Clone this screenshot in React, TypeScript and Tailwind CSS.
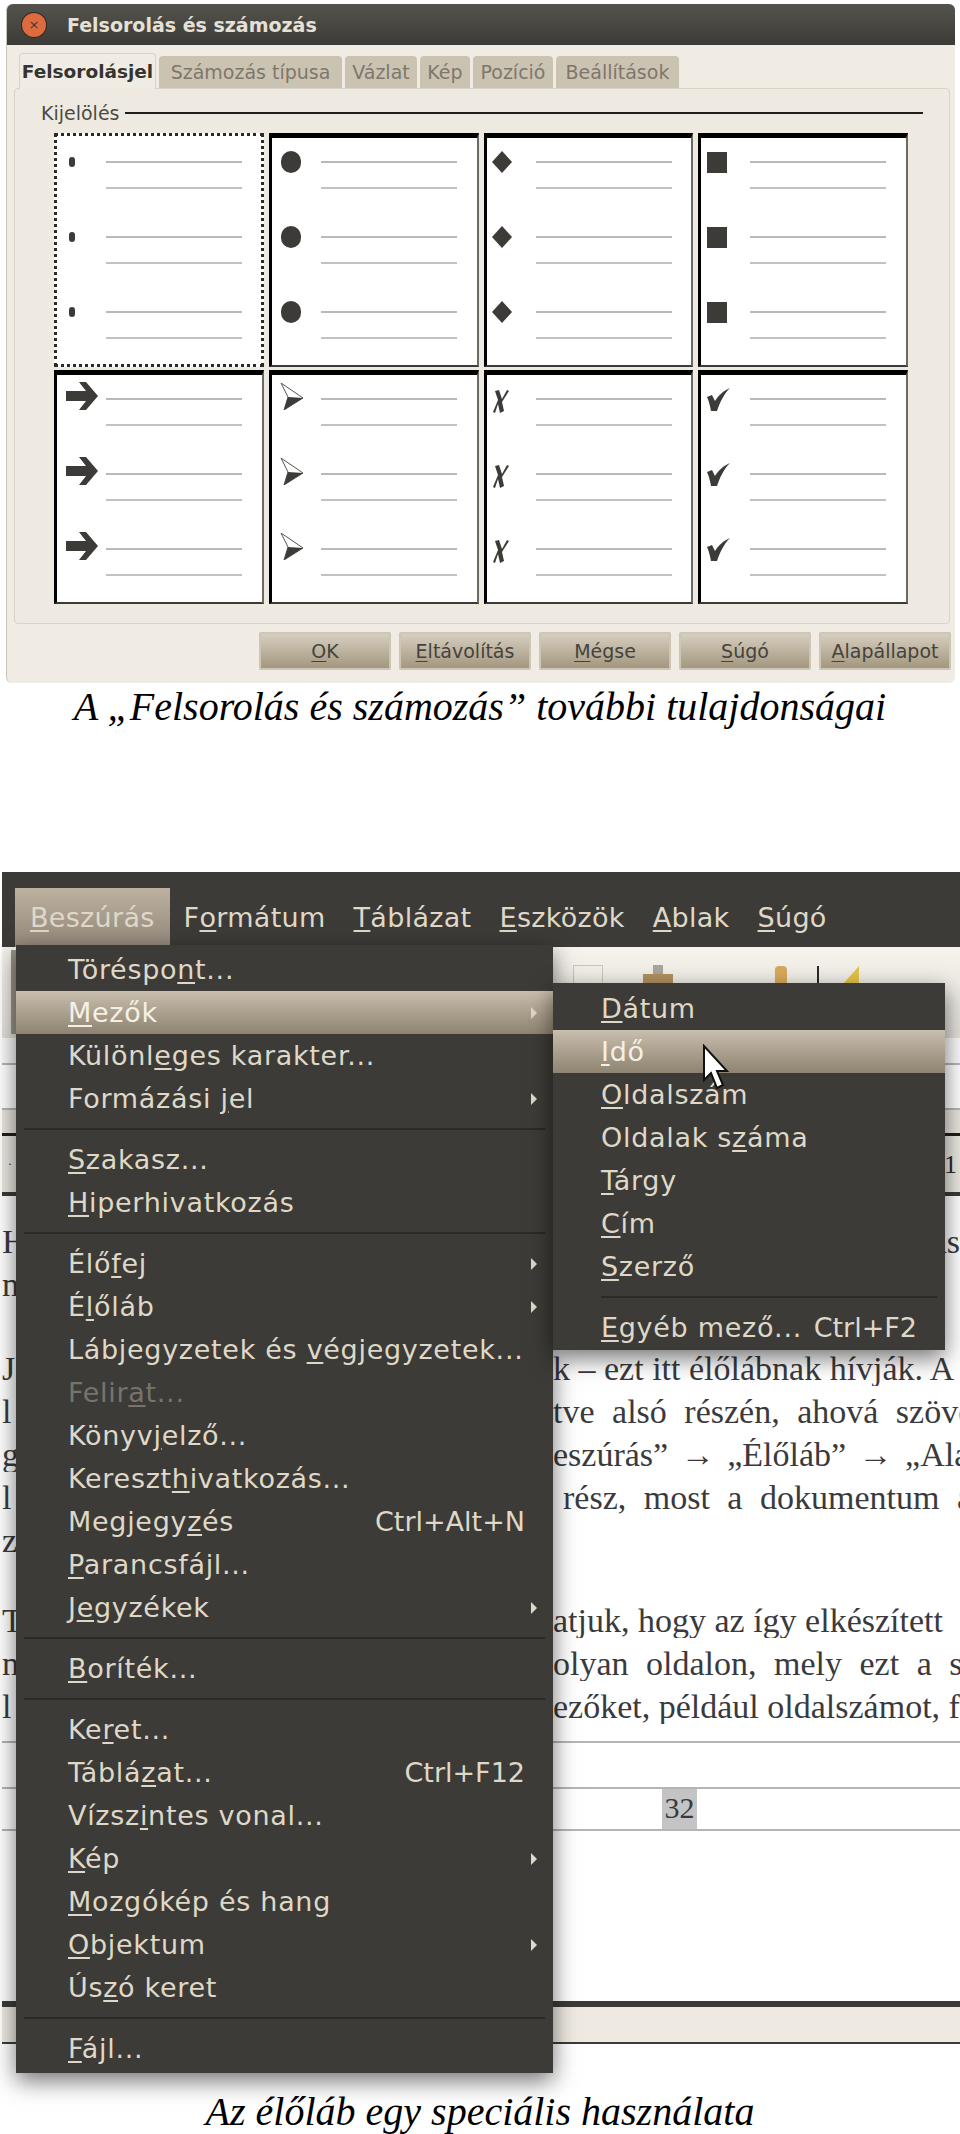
import React from 'react';

type MenuEntry = { label?: string; sub?: boolean; shortcut?: string; active?: boolean; disabled?: boolean; sep?: boolean };

const MAIN_MENU: MenuEntry[] = [
  { label: 'Töréspo_nt...' },
  { label: '_Mezők', sub: true, active: true },
  { label: 'Különl_eges karakter...' },
  { label: 'Formázási _jel', sub: true },
  { sep: true },
  { label: '_Szakasz...' },
  { label: '_Hiperhivatkozás' },
  { sep: true },
  { label: 'Élő_fej', sub: true },
  { label: 'É_lőláb', sub: true },
  { label: 'Lábjegyzetek és _végjegyzetek...' },
  { label: 'Felir_at...', disabled: true },
  { label: 'Könyv_jelző...' },
  { label: 'Kereszt_hivatkozás...' },
  { label: 'Megjegy_zés', shortcut: 'Ctrl+Alt+N' },
  { label: '_Parancsfájl...' },
  { label: 'J_egyzékek', sub: true },
  { sep: true },
  { label: '_Boríték...' },
  { sep: true },
  { label: 'Ke_ret...' },
  { label: 'Táblá_zat...', shortcut: 'Ctrl+F12' },
  { label: 'Vízsz_intes vonal...' },
  { label: '_Kép', sub: true },
  { label: '_Mozgókép és hang' },
  { label: '_Objektum', sub: true },
  { label: 'Ús_zó keret' },
  { sep: true },
  { label: '_Fájl...' },
];

const FIELDS_MENU: MenuEntry[] = [
  { label: '_Dátum' },
  { label: '_Idő', active: true },
  { label: '_Oldalszám' },
  { label: 'Oldalak s_záma' },
  { label: '_Tárgy' },
  { label: '_Cím' },
  { label: '_Szerző' },
  { sep: true },
  { label: '_Egyéb mező...', shortcut: 'Ctrl+F2' },
];

const DOC_LINES = [
  { left: 'H', right: 'ás', end: true, h: 'h-[43px]' },
  { left: 'n', right: '', h: 'h-[43px]' },
  { left: '', right: '', h: 'h-[41px]' },
  { left: 'J', right: 'k – ezt itt élőlábnak hívják. A', h: 'h-[43px]' },
  { left: 'l', right: 'tve alsó részén, ahová szöveg', wide: true, h: 'h-[43px]' },
  { left: 'g', right: 'eszúrás” → „Élőláb” → „Alap', mid: true, h: 'h-[43px]' },
  { left: 'l', right: 'rész, most a dokumentum alján', wide: true, pad: true, h: 'h-[43px]' },
  { left: 'z', right: '', h: 'h-[43px]' },
  { left: '', right: '', h: 'h-[37px]' },
  { left: 'T', right: 'atjuk, hogy az így elkészített', h: 'h-[43px]' },
  { left: 'n', right: 'olyan oldalon, mely ezt a stílust', wide: true, h: 'h-[43px]' },
  { left: 'l', right: 'ezőket, például oldalszámot, f', h: 'h-[43px]' },
];

const BUTTONS = ['_OK', '_Eltávolítás', '_Mégse', '_Súgó', '_Alapállapot'];

const TABS = [
  { label: 'Számozás típusa', w: 'w-[183px]' },
  { label: 'Vázlat', w: 'w-[72px]' },
  { label: 'Kép', w: 'w-[50px]' },
  { label: 'Pozíció', w: 'w-[80px]' },
  { label: 'Beállítások', w: 'w-[123px]' },
];

function Mnemonic({ text }: { text: string }) {
  const i = text.indexOf('_');
  if (i < 0) return <>{text}</>;
  return (
    <>
      {text.slice(0, i)}
      <span className="underline underline-offset-[3px]">{text[i + 1]}</span>
      {text.slice(i + 2)}
    </>
  );
}

function Bullet({ kind }: { kind: number }) {
  const cls = 'shrink-0 fill-[#3c3b37]';
  switch (kind) {
    case 0:
      return <div className="ml-[12px] h-[10px] w-[6px] shrink-0 rounded-full bg-[#3c3b37]" />;
    case 1:
      return <div className="ml-[9px] h-[22px] w-[20px] shrink-0 rounded-full bg-[#3c3b37]" />;
    case 2:
      return (
        <svg className={`ml-[5px] ${cls}`} width="20" height="22" viewBox="0 0 20 22">
          <path d="M10 0L20 11L10 22L0 11Z" />
        </svg>
      );
    case 3:
      return <div className="ml-[6px] h-[21px] w-[20px] shrink-0 bg-[#3c3b37]" />;
    case 4:
      return (
        <svg className={`ml-[9px] -mt-[6px] ${cls}`} width="32" height="28" viewBox="0 0 32 28">
          <path d="M13 0h7l12 14-12 14h-7l7-9H0V9h20z" />
        </svg>
      );
    case 5:
      return (
        <svg className="ml-[8px] -mt-[6px] shrink-0" width="23" height="27" viewBox="0 0 23 27">
          <path d="M1 0L23 15L4 27L8 14Z" fill="#fff" stroke="#55534d" strokeWidth="1" />
          <path d="M8 14L23 15L4 27Z" fill="#3c3b37" />
        </svg>
      );
    case 6:
      return (
        <svg className="ml-[6px] mt-[4px] shrink-0" width="16" height="23" viewBox="0 0 16 23">
          <path d="M2 1L6 0L9 9L14 0L16 1L9 12L11 21L7 23L5 14L2 23L0 22L5 10Z" fill="#3c3b37" />
        </svg>
      );
    default:
      return (
        <svg className="ml-[6px] mt-[1px] shrink-0" width="23" height="23" viewBox="0 0 23 23">
          <path d="M0 9L5 7L8 13C12 7 16 3 23 0C17 6 13 14 10 23L4 23C3 18 2 13 0 9Z" fill="#3c3b37" />
        </svg>
      );
  }
}

function BulletCell({ kind, selected }: { kind: number; selected?: boolean }) {
  const frame = selected
    ? 'border-[3px] border-dotted border-[#2b2a27] pt-[25px]'
    : 'border-t-[5px] border-l-[3px] border-r-2 border-b-2 border-t-black border-l-black border-r-[#6d6a62] border-b-[#3c3b37] pt-[23px]';
  return (
    <div className={`h-[234px] bg-white ${frame}`}>
      {[0, 1, 2].map((n) => (
        <div key={n} className="h-[75px]">
          <div className="flex h-[2px] items-center">
            <div className="flex w-[49px] shrink-0 items-center">
              <Bullet kind={kind} />
            </div>
            <div className="h-[2px] w-[136px] bg-[#b9b9b9]" />
          </div>
          <div className="ml-[49px] mt-[24px] h-[2px] w-[136px] bg-[#c2c2c2]" />
        </div>
      ))}
    </div>
  );
}

function Dialog() {
  return (
    <div className="ml-[6px] mt-[4px] h-[679px] w-[949px] rounded-[6px] border-l border-[#c8c3b8] bg-[#f0ece4]">
      <div className="flex h-[41px] items-center rounded-t-[6px] bg-gradient-to-b from-[#55534d] to-[#3c3b37] pl-[15px]">
        <div className="flex h-[24px] w-[24px] items-center justify-center rounded-full bg-[#dd6b3d] text-[13px] leading-none text-[#3c3b37] ring-1 ring-[#2c2b28]">
          ×
        </div>
        <span className="ml-[21px] mt-[2px] text-[19px] font-bold text-[#e6e1d6]">Felsorolás és számozás</span>
      </div>

      <div className="flex items-end gap-[3px] pl-[12px] pt-[8px]">
        <div className="relative z-10 -mb-px flex h-[36px] w-[137px] items-center justify-center rounded-t-[4px] border border-b-0 border-[#d8d3c8] bg-[#f0ece4] text-[18.5px] font-bold text-[#35342f]">
          Felsorolásjel
        </div>
        {TABS.map((t) => (
          <div key={t.label} className={`flex h-[32px] items-center justify-center rounded-t-[4px] bg-[#cbc3b2] text-[19px] text-[#7d776b] ${t.w}`}>
            {t.label}
          </div>
        ))}
      </div>

      <div className="ml-[7px] h-[536px] w-[936px] rounded-[4px] border border-[#d8d3c8] bg-[#eeeae2] px-[26px] pt-[12px]">
        <div className="flex items-center gap-[6px]">
          <span className="text-[19px] leading-[24px] text-[#4c4a42]">Kijelölés</span>
          <div className="h-[2px] flex-1 bg-[#1f1e1c]" />
        </div>
        <div className="ml-[13px] mt-[8px] grid w-[854px] grid-cols-4 gap-x-[5px] gap-y-[3px]">
          {[0, 1, 2, 3, 4, 5, 6, 7].map((k) => (
            <BulletCell key={k} kind={k} selected={k === 0} />
          ))}
        </div>
      </div>

      <div className="mt-[8px] flex justify-end gap-[8px] pr-[4px]">
        {BUTTONS.map((b) => (
          <div
            key={b}
            className="flex h-[38px] w-[132px] items-center justify-center rounded-[2px] border-2 border-[#cdc5b5] bg-gradient-to-b from-[#d6cebf] to-[#a4977f] text-[19px] text-[#45433c]"
          >
            <Mnemonic text={b} />
          </div>
        ))}
      </div>
    </div>
  );
}

function MenuList({ items, className }: { items: MenuEntry[]; className: string }) {
  return (
    <div className={`absolute bg-[#3c3b37] shadow-[0_8px_22px_rgba(0,0,0,0.55)] ${className}`}>
      {items.map((it, idx) =>
        it.sep ? (
          <div key={idx} className="flex h-[18px] items-center px-[8px]">
            <div className="h-[2px] w-full bg-[#2b2a27]" />
          </div>
        ) : (
          <div
            key={idx}
            className={`flex h-[43px] items-center justify-between pl-[52px] text-[27px] leading-none whitespace-nowrap ${it.sub ? 'pr-[16px]' : 'pr-[28px]'} ${it.active ? 'bg-gradient-to-b from-[#c9bfae] to-[#8f8371] text-[#f5f0e5]' : it.disabled ? 'text-[#77746c]' : 'text-[#dfd8c8]'}`}
          >
            <span className="tracking-[0.7px]">
              <Mnemonic text={it.label ?? ''} />
            </span>
            {it.shortcut && <span>{it.shortcut}</span>}
            {it.sub && (
              <svg width="6" height="12" viewBox="0 0 6 12">
                <path d="M0 0L6 6L0 12Z" fill="#dfd8c8" />
              </svg>
            )}
          </div>
        ),
      )}
    </div>
  );
}

function MenuBar() {
  const names = ['F_ormátum', '_Táblázat', '_Eszközök', '_Ablak', '_Súgó'];
  return (
    <div className="flex h-[75px] items-end bg-[#3c3b37] pl-[13px] text-[27px] leading-none tracking-[0.3px] text-[#dfd8c8]">
      <div className="flex h-[59px] items-center bg-gradient-to-b from-[#bdb2a0] to-[#93877a] px-[15px]">
        <Mnemonic text="_Beszúrás" />
      </div>
      {names.map((n) => (
        <div key={n} className="flex h-[59px] items-center px-[14px]">
          <Mnemonic text={n} />
        </div>
      ))}
    </div>
  );
}

function DocBackground() {
  return (
    <>
      <div className="h-[91px] bg-gradient-to-b from-[#f6f3ed] to-[#e3e0d9] pl-[9px] pt-[3px]">
        <div className="flex h-[84px] items-start">
          <div className="h-[84px] w-[5px] bg-[#9a948a]" />
          <div className="ml-[557px] mt-[15px] flex items-end">
            <div className="h-[19px] w-[30px] border border-b-0 border-[#c9c5bc]" />
            <div className="ml-[40px] flex h-[19px] w-[30px] flex-col items-center">
              <div className="h-[9px] w-[10px] bg-[#a9a59c]" />
              <div className="h-[10px] w-[30px] bg-[#b08f5e]" />
            </div>
            <div className="ml-[102px] h-[18px] w-[12px] rounded-t-[4px] bg-[#d6a95c]" />
            <div className="ml-[30px] h-[18px] w-[2px] bg-[#2b2a27]" />
            <svg className="ml-[24px]" width="16" height="18" viewBox="0 0 16 18">
              <path d="M16 0V18H0Z" fill="#e3c348" />
            </svg>
          </div>
        </div>
      </div>
      <div className="h-[25px] bg-[#fafafa]" />
      <div className="h-[2px] bg-[#b5b5b5]" />
      <div className="h-[43px] bg-white" />
      <div className="h-[2px] bg-[#b5b5b5]" />
      <div className="h-[23px] bg-[#e9e5dc]" />
      <div className="h-[3px] bg-[#1f1e1c]" />
      <div className="flex h-[56px] items-center justify-between bg-[#ebe8e1] pl-[6px] pr-[3px] font-['Liberation_Serif',serif] text-[26px] text-[#2b2a27]">
        <span className="text-[12px]">·</span>
        <span>1</span>
      </div>
      <div className="h-[4px] bg-[#3c3b37]" />
      <div className="bg-white pt-[24px] font-['Liberation_Serif',serif] text-[34px] leading-none text-[#3a3a3e]">
        {DOC_LINES.map((line, i) => (
          <div key={i} className={`flex items-center ${line.h}`}>
            <span className="w-[14px] shrink-0 overflow-hidden whitespace-nowrap">{line.left}</span>
            <div
              className={`ml-[537px] min-w-0 flex-1 overflow-hidden whitespace-nowrap ${line.end ? 'text-right' : ''} ${line.wide ? '[word-spacing:9px]' : ''} ${line.mid ? '[word-spacing:4px]' : ''} ${line.pad ? 'pl-[10px]' : ''}`}
            >
              {line.right}
            </div>
          </div>
        ))}
      </div>
      <div className="h-[13px] bg-white" />
      <div className="h-[2px] bg-[#b5b5b5]" />
      <div className="h-[44px] bg-white" />
      <div className="h-[2px] bg-[#b5b5b5]" />
      <div className="flex h-[40px] items-center bg-white pl-[660px] font-['Liberation_Serif',serif] text-[30px] text-[#3a3a3e]">
        <span className="flex h-[40px] w-[35px] items-center justify-center bg-[#c4c4c4] pb-[3px]">32</span>
      </div>
      <div className="h-[2px] bg-[#b5b5b5]" />
      <div className="h-[170px] bg-white" />
      <div className="h-[6px] bg-[#3c3b37]" />
      <div className="h-[35px] bg-[#eeeae2]" />
      <div className="h-[2px] bg-[#3c3b37]" />
    </>
  );
}

function Cursor() {
  return (
    <svg className="absolute left-[699px] top-[172px]" width="28" height="46" viewBox="0 0 28 46">
      <path d="M3 2V36L10 29L16 44L22 41L16 27H26Z" fill="#fff" stroke="#111" strokeWidth="2" />
    </svg>
  );
}

export default function App() {
  return (
    <div className="min-h-[2134px] overflow-hidden bg-white font-['DejaVu_Sans',sans-serif]">
      <Dialog />
      <div className="flex h-[48px] items-center justify-center font-['Liberation_Serif',serif] text-[40px] italic text-black">
        A „Felsorolás és számozás” további tulajdonságai
      </div>

      <div className="relative ml-[2px] mt-[141px]">
        <MenuBar />
        <DocBackground />
        <MenuList items={MAIN_MENU} className="left-[14px] top-[73px] w-[537px] pb-[3px] pt-[3px]" />
        <MenuList items={FIELDS_MENU} className="left-[551px] top-[111px] w-[392px] pb-[1px] pt-[4px] [&>div]:pl-[48px]" />
        <Cursor />
      </div>

      <div className="mt-[44px] flex h-[48px] items-center justify-center font-['Liberation_Serif',serif] text-[40px] italic text-black">
        Az élőláb egy speciális használata
      </div>
    </div>
  );
}
